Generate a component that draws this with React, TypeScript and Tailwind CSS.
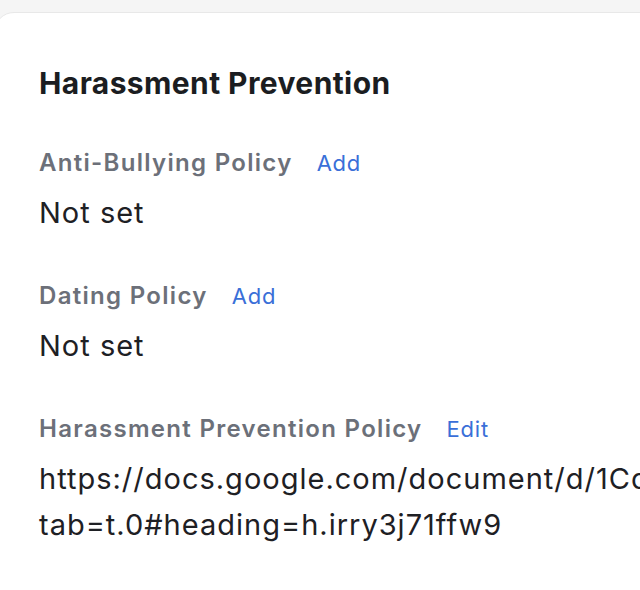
export default function App() {
  const fields = [
    { label: 'Anti-Bullying Policy', action: 'Add', value: ['Not set'] },
    { label: 'Dating Policy', action: 'Add', value: ['Not set'] },
    {
      label: 'Harassment Prevention Policy',
      action: 'Edit',
      value: [
        'https://docs.google.com/document/d/1Cq8vWnR2kLmP4tZs7YhXb3JfGd9aE5oUiQ/edit?',
        'tab=t.0#heading=h.irry3j71ffw9',
      ],
    },
  ];

  return (
    <div
      className="h-[590px] w-[640px] overflow-hidden bg-[#f5f5f5] pt-[12px]"
      style={{ fontFamily: 'Inter, Lato, sans-serif' }}
    >
      <div className="ml-[-6px] h-[700px] w-[760px] rounded-tl-[20px] border border-[#e8e8e8] bg-white pl-[44px] pt-[52px]">
        <h2 className="text-[30px] font-bold leading-[36px] tracking-[0.4px] text-[#1b1d21]">
          Harassment Prevention
        </h2>

        <div className="mt-[46px] flex flex-col gap-[44px]">
          {fields.map((f) => (
            <div key={f.label}>
              <div className="flex items-baseline gap-[24px] leading-[32px]">
                <span className="text-[24px] font-semibold tracking-[1.3px] text-[#6c7079]">
                  {f.label}
                </span>
                <span className="text-[22px] tracking-[0.8px] text-[#3a6fd8]">
                  {f.action}
                </span>
              </div>
              <div className="mt-[11px] text-[29px] leading-[46px] tracking-[1px] text-[#1e2024]">
                {f.value.map((line) => (
                  <div key={line} className="whitespace-nowrap">
                    {line}
                  </div>
                ))}
              </div>
            </div>
          ))}
        </div>
      </div>
    </div>
  );
}
